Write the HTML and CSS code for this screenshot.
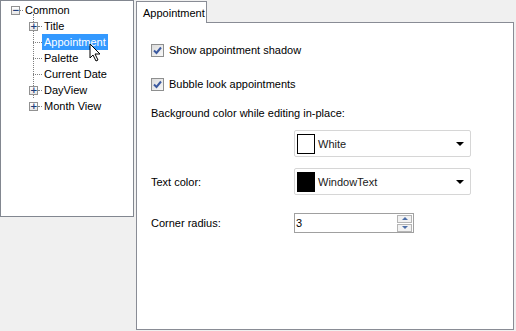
FILE: index.html
```html
<!DOCTYPE html>
<html lang="en">
<head>
    <meta charset="UTF-8">
    <title>Options</title>
    <link rel="stylesheet" href="styles.css">
</head>
<body>
    <!-- tree of option pages on the left -->
    <div class="tree">
        <div class="node root">
            <span class="expander">&minus;</span><span class="hline"></span><span class="label">Common</span>
        </div>
        <div class="children">
            <div class="node">
                <span class="expander">+</span><span class="hline"></span><span class="label">Title</span>
            </div>
            <div class="node leaf">
                <span class="hline long"></span><span class="label selected">Appointment</span>
                <svg class="cursor" width="14" height="20" viewBox="0 0 14 20">
                    <path d="M1 1 L1 15 L4 12 L7 18 L9 17 L6 11 L11 11 Z" fill="#fff" stroke="#000" stroke-width="1"/>
                </svg>
            </div>
            <div class="node leaf">
                <span class="hline long"></span><span class="label">Palette</span>
            </div>
            <div class="node leaf">
                <span class="hline long"></span><span class="label">Current Date</span>
            </div>
            <div class="node">
                <span class="expander">+</span><span class="hline"></span><span class="label">DayView</span>
            </div>
            <div class="node last">
                <span class="expander">+</span><span class="hline"></span><span class="label">Month View</span>
            </div>
        </div>
    </div>

    <!-- tab control on the right -->
    <div class="tabs">
        <div class="tab-strip">
            <div class="tab">Appointment</div>
        </div>
        <div class="tab-page">
            <label class="check-row">
                <span class="checkbox">
                    <svg width="9" height="9" viewBox="0 0 9 9"><path d="M1 4.5 L3.5 7 L8 1.5" fill="none" stroke="#3c5aa0" stroke-width="2"/></svg>
                </span>
                Show appointment shadow
            </label>
            <label class="check-row">
                <span class="checkbox">
                    <svg width="9" height="9" viewBox="0 0 9 9"><path d="M1 4.5 L3.5 7 L8 1.5" fill="none" stroke="#3c5aa0" stroke-width="2"/></svg>
                </span>
                Bubble look appointments
            </label>

            <div class="field-label wide">Background color while editing in-place:</div>
            <div class="field-row first">
                <span></span>
                <div class="combo">
                    <span class="swatch white"></span>
                    <span class="combo-text">White</span>
                    <span class="arrow"></span>
                </div>
            </div>

            <div class="field-row second">
                <span class="field-label">Text color:</span>
                <div class="combo">
                    <span class="swatch black"></span>
                    <span class="combo-text">WindowText</span>
                    <span class="arrow"></span>
                </div>
            </div>

            <div class="field-row spin-row">
                <span class="field-label">Corner radius:</span>
                <div class="spin">
                    <span class="spin-value">3</span>
                    <span class="spin-buttons">
                        <span class="spin-btn up"></span>
                        <span class="spin-btn down"></span>
                    </span>
                </div>
            </div>
        </div>
    </div>
</body>
</html>
```

FILE: styles.css
```css
* {
    box-sizing: border-box;
}

body, html {
    margin: 0;
    height: 100%;
}

body {
    background: #f0f0f0;
    font-family: Tahoma, "Liberation Sans", sans-serif;
    font-size: 11px;
    color: #000;
    display: flex;
    align-items: flex-start;
    gap: 2px;
    overflow: hidden;
}

/* left tree */
.tree {
    width: 134px;
    height: 217px;
    background: #fff;
    border: 1px solid #828790;
    padding: 1px 0 0 10px;
}

.node {
    height: 16px;
    display: flex;
    align-items: center;
    position: relative;
}

.children {
    margin-left: 18px;
    position: relative;
}

/* vertical dotted guide for the children */
.children::before {
    content: "";
    position: absolute;
    left: 4px;
    top: -4px;
    height: 84px;
    border-left: 1px dotted #808080;
}

.expander {
    width: 9px;
    height: 9px;
    border: 1px solid #919191;
    background: linear-gradient(#fff, #e6e6e6);
    font-size: 9px;
    line-height: 6px;
    text-align: center;
    color: #1d3f7a;
    font-family: "DejaVu Sans", sans-serif;
    font-weight: bold;
    position: relative;
    z-index: 1;
}

.hline {
    width: 4px;
    border-top: 1px dotted #808080;
}

.root .hline {
    width: 3px;
}

.hline.long {
    width: 9px;
    margin-left: 4px;
}

.label {
    padding: 0 2px;
    line-height: 16px;
    height: 16px;
    white-space: nowrap;
}

.label.selected {
    background: #3399ff;
    color: #fff;
}

.cursor {
    position: absolute;
    left: 60px;
    top: 9px;
}

/* right tab control */
.tabs {
    width: 378px;
    height: 331px;
    display: flex;
    flex-direction: column;
}

.tab-strip {
    height: 22px;
    display: flex;
    align-items: flex-end;
}

.tab {
    height: 22px;
    padding: 3px 6px 0 6px;
    background: #fff;
    border: 1px solid #898c95;
    border-bottom: none;
    margin-bottom: -1px;
    position: relative;
    z-index: 1;
    width: 71px;
    line-height: 16px;
}

.tab-page {
    flex: 1;
    margin-bottom: 1px;
    background: #fff;
    border: 1px solid #898c95;
    padding: 17px 0 0 14px;
}

.check-row {
    display: flex;
    align-items: center;
    gap: 5px;
    height: 20px;
    margin-bottom: 14px;
}

.checkbox {
    width: 13px;
    height: 13px;
    border: 1px solid #8e8f8f;
    background: linear-gradient(135deg, #dcdcdc, #f8f8f8);
    display: flex;
    align-items: center;
    justify-content: center;
}

.field-label {
    line-height: 14px;
}

.field-label.wide {
    margin-top: -2px;
}

.field-row {
    display: grid;
    grid-template-columns: 143px 177px;
    align-items: center;
}

.field-row.first {
    margin-top: 10px;
}

.field-row.second {
    margin-top: 11px;
}

.combo {
    height: 27px;
    border: 1px solid #d6d6d6;
    border-radius: 2px;
    display: flex;
    align-items: center;
    padding: 0 6px 0 2px;
}

.swatch {
    width: 18px;
    height: 20px;
    border: 1px solid #000;
    margin-right: 3px;
}

.swatch.white {
    background: #fff;
}

.swatch.black {
    background: #000;
}

.combo-text {
    flex: 1;
    color: #1a1a1a;
}

.arrow {
    width: 0;
    height: 0;
    border-left: 4px solid transparent;
    border-right: 4px solid transparent;
    border-top: 4px solid #000;
}

.spin-row {
    grid-template-columns: 143px 120px;
    margin-top: 18px;
}

.spin {
    height: 20px;
    border: 1px solid #a0a0a0;
    display: flex;
    align-items: center;
    padding: 0 1px 0 1px;
}

.spin-value {
    flex: 1;
}

.spin-buttons {
    display: flex;
    flex-direction: column;
    gap: 1px;
}

.spin-btn {
    width: 15px;
    height: 8px;
    border: 1px solid #b5b5b5;
    background: #f2f2f2;
    display: flex;
    align-items: center;
    justify-content: center;
}

.spin-btn::after {
    content: "";
    border-left: 3px solid transparent;
    border-right: 3px solid transparent;
}

.spin-btn.up::after {
    border-bottom: 3px solid #4d6fa8;
}

.spin-btn.down::after {
    border-top: 3px solid #4d6fa8;
}
```
